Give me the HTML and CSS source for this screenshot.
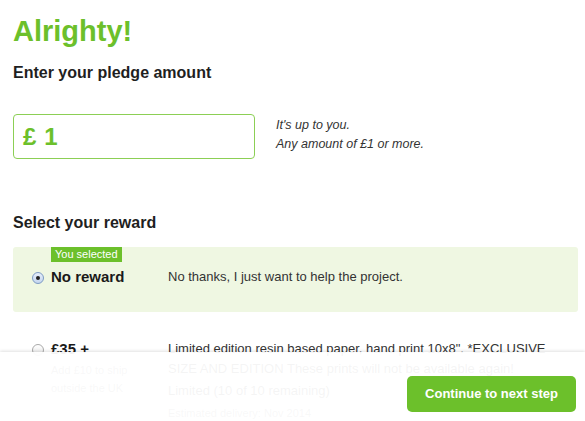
FILE: index.html
```html
<!DOCTYPE html>
<html lang="en">
<head>
  <meta charset="UTF-8" />
  <meta name="viewport" content="width=device-width, initial-scale=1.0" />
  <title>Pledge</title>
  <link rel="stylesheet" href="styles.css">
</head>
<body>
  <div class="page">
    <h1 class="title">Alrighty!</h1>
    <h2 class="section-title">Enter your pledge amount</h2>

    <div class="pledge-row">
      <div class="amount-box">
        <span class="currency">£</span>
        <span class="amount">1</span>
      </div>
      <div class="amount-help">
        <p>It's up to you.</p>
        <p>Any amount of £1 or more.</p>
      </div>
    </div>

    <h2 class="section-title reward-title">Select your reward</h2>

    <div class="reward selected">
      <span class="badge">You selected</span>
      <div class="reward-left">
        <span class="radio checked"></span>
        <span class="reward-name">No reward</span>
      </div>
      <div class="reward-desc">
        <p>No thanks, I just want to help the project.</p>
      </div>
    </div>

    <div class="reward">
      <div class="reward-left">
        <span class="radio"></span>
        <div>
          <span class="reward-name">£35 +</span>
          <p class="reward-note">Add £10 to ship<br>outside the UK</p>
        </div>
      </div>
      <div class="reward-desc">
        <p>Limited edition resin based paper, hand print 10x8". *EXCLUSIVE SIZE AND EDITION These prints will not be available again!</p>
        <p class="limit">Limited (10 of 10 remaining)</p>
        <p class="delivery">Estimated delivery: Nov 2014</p>
      </div>
    </div>
  </div>

  <div class="footer-bar">
    <button class="next-btn">Continue to next step</button>
  </div>
</body>
</html>
```

FILE: styles.css
```css
html, body {
  margin: 0;
  padding: 0;
  background: #fff;
  color: #222;
  font-family: 'Liberation Sans', Arial, sans-serif;
}
p {
  margin: 0;
}
.page {
  padding: 13px 7px 40px 13px;
}
.title {
  margin: 0;
  font-size: 29px;
  line-height: 36px;
  color: #6cc02b;
  font-weight: bold;
}
.section-title {
  margin: 14px 0 0;
  font-size: 16px;
  line-height: 20px;
  font-weight: bold;
  color: #1f1f1f;
}
.pledge-row {
  display: flex;
  align-items: center;
  margin-top: 31px;
}
.amount-box {
  width: 231px;
  height: 43px;
  border: 1px solid #8ccf55;
  border-radius: 4px;
  display: flex;
  align-items: center;
  gap: 8px;
  padding-left: 9px;
  color: #6cc02b;
  font-weight: bold;
  font-size: 24px;
}
.amount-help {
  margin-left: 21px;
  font-style: italic;
  font-size: 12.5px;
  line-height: 19px;
  color: #333;
  margin-top: -4px;
}
.reward-title {
  margin-top: 54px;
}
.reward {
  position: relative;
  display: flex;
  margin-top: 14px;
  padding: 20px 10px 20px 19px;
  border-radius: 3px;
  font-size: 13px;
  line-height: 20px;
  color: #333;
}
.reward.selected {
  background: #eff7e2;
  padding-top: 20px;
  padding-bottom: 25px;
}
.reward + .reward {
  margin-top: 7px;
}
.badge {
  position: absolute;
  top: 0;
  left: 38px;
  background: #6cc02b;
  color: #fff;
  font-size: 11px;
  line-height: 15px;
  padding: 0 4px;
}
.reward-left {
  width: 136px;
  display: flex;
  align-items: flex-start;
  gap: 7px;
  flex-shrink: 0;
}
.radio {
  width: 10px;
  height: 10px;
  margin-top: 5px;
  border: 1px solid #a9a9a9;
  border-radius: 50%;
  background: linear-gradient(#fff, #e8e8e8);
  display: flex;
  align-items: center;
  justify-content: center;
  flex-shrink: 0;
}
.radio.checked {
  border-color: #7d9bc4;
  background: linear-gradient(#e6eefa, #c5d6ef);
}
.radio.checked::after {
  content: "";
  width: 4px;
  height: 4px;
  border-radius: 50%;
  background: #222;
}
.reward-name {
  font-size: 15px;
  font-weight: bold;
  color: #1a1a1a;
  line-height: 20px;
}
.reward-note {
  margin-top: 1px;
  font-size: 11px;
  line-height: 18px;
  color: #777;
}
.reward-desc {
  flex: 1;
}
.reward-desc .limit {
  margin-top: 2px;
}
.reward-desc .delivery {
  margin-top: 2px;
  font-size: 11px;
  color: #777;
}
.footer-bar {
  position: fixed;
  left: 0;
  right: 0;
  bottom: 0;
  height: 69px;
  background: rgba(255, 255, 255, 0.95);
  box-shadow: 0 -1px 3px rgba(0, 0, 0, 0.12);
  display: flex;
  align-items: center;
  justify-content: flex-end;
  padding-right: 9px;
}
.next-btn {
  background: #6cc02b;
  color: #fff;
  border: none;
  border-radius: 5px;
  width: 169px;
  height: 36px;
  font-family: inherit;
  font-size: 13px;
  font-weight: bold;
  margin-top: 14px;
  cursor: pointer;
}
```
